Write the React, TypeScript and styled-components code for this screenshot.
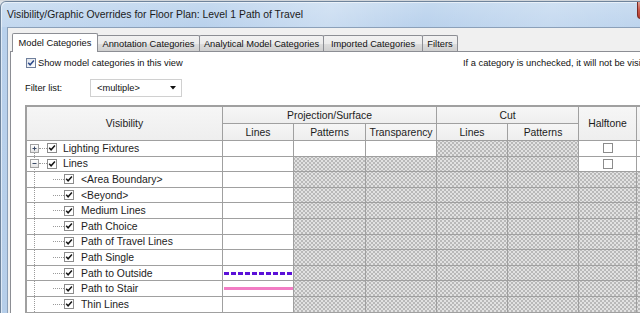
import React from "react";
import styled, { createGlobalStyle, css } from "styled-components";

const GlobalStyle = createGlobalStyle`
  html, body { margin: 0; padding: 0; }
  body {
    width: 640px; height: 313px; overflow: hidden; background: #dde2e8;
    font-family: "Liberation Sans", Arial, sans-serif;
  }
  #root { width: 640px; height: 313px; overflow: hidden; }
`;

const COLS = "196px 71px 72px 71px 71px 71px 58px 80px";
const GRID = "#a0a0a0";

const Screen = styled.div`
  width: 640px;
  height: 313px;
  overflow: hidden;
  display: flex;
  flex-direction: column;
  background: #dfe3e8;
`;

const BackStrip = styled.div`
  flex: none;
  height: 1px;
  background: #d2d6db;
`;

const Window = styled.div`
  flex: 1;
  width: 686px;
  min-height: 0;
  display: flex;
  flex-direction: column;
  box-sizing: border-box;
  border: 1px solid #6f849c;
  border-bottom: none;
  border-radius: 6px 6px 0 0;
  background: linear-gradient(180deg, #c6daf0 0px, #b9d1ec 26px, #b6cee9 100%);
  box-shadow: inset 1px 1px 0 rgba(255, 255, 255, 0.55);
`;

const TitleBar = styled.div`
  flex: none;
  height: 25px;
  display: flex;
  align-items: flex-start;
  padding: 0 6px;
  background: linear-gradient(
    105deg,
    rgba(255, 255, 255, 0.15) 0%,
    rgba(255, 255, 255, 0) 30%,
    rgba(255, 255, 255, 0.25) 48%,
    rgba(255, 255, 255, 0) 62%,
    rgba(255, 255, 255, 0.18) 80%,
    rgba(255, 255, 255, 0) 100%
  );
`;

const Title = styled.div`
  font-size: 10.4px;
  line-height: 25px;
  color: #1b1b1b;
  white-space: nowrap;
`;

const CloseButton = styled.div`
  margin-left: auto;
  width: 42px;
  height: 17px;
  box-sizing: border-box;
  border: 1px solid #7a2a22;
  border-top: none;
  border-radius: 0 0 4px 4px;
  background: linear-gradient(180deg, #e0a093 0%, #c8584a 50%, #b63b2c 100%);
`;

const Client = styled.div`
  flex: 1;
  min-height: 0;
  margin-left: 6px;
  padding: 5px 0 0 2px;
  display: flex;
  flex-direction: column;
  background: #f0f0f0;
  border-top: 1px solid #8ba0b9;
  border-left: 1px solid #8ba0b9;
`;

const TabStrip = styled.div`
  flex: none;
  height: 18px;
  display: flex;
  align-items: flex-end;
  padding-left: 2px;
`;

const Tab = styled.div<{ $active?: boolean; $w: number }>`
  position: relative;
  z-index: ${(p) => (p.$active ? 2 : 1)};
  width: ${(p) => p.$w}px;
  height: ${(p) => (p.$active ? 19 : 16)}px;
  margin-right: -1px;
  margin-bottom: ${(p) => (p.$active ? -1 : 0)}px;
  box-sizing: border-box;
  border: 1px solid #8c8e94;
  border-bottom: none;
  border-radius: 2px 2px 0 0;
  display: flex;
  align-items: center;
  justify-content: center;
  font-size: 9.3px;
  color: #111;
  white-space: nowrap;
  background: ${(p) =>
    p.$active
      ? "#ffffff"
      : "linear-gradient(180deg, #f2f2f2 0%, #ebebeb 50%, #dddddd 51%, #cfcfcf 100%)"};
`;

const Panel = styled.div`
  flex: 1;
  min-height: 0;
  display: flex;
  flex-direction: column;
  padding: 5px 0 0 14px;
  background: #ffffff;
  border-top: 1px solid #8c8e94;
  border-left: 1px solid #8c8e94;
`;

const TopRow = styled.div`
  display: grid;
  grid-template-columns: 438px auto;
  align-items: start;
  font-size: 9.3px;
  color: #111;
  white-space: nowrap;
`;

const CheckLabel = styled.label`
  display: flex;
  align-items: center;
  gap: 2px;
  height: 11px;
  margin-left: 1px;
`;

const Note = styled.div`
  padding-top: 1px;
`;

const Box = styled.span<{ $variant?: "aero" | "grid" }>`
  flex: none;
  width: 10px;
  height: 10px;
  box-sizing: border-box;
  display: inline-flex;
  align-items: center;
  justify-content: center;
  border: 1px solid ${(p) => (p.$variant === "aero" ? "#6f7f9c" : "#8c8c8c")};
  background: ${(p) =>
    p.$variant === "aero" ? "linear-gradient(135deg, #dfe3ea, #ffffff)" : "#ffffff"};
`;

const FilterRow = styled.div`
  margin-top: 11px;
  height: 18px;
  display: flex;
  align-items: center;
  font-size: 9.3px;
  color: #111;
`;

const FilterLabel = styled.span`
  width: 65px;
`;

const Combo = styled.div`
  width: 92px;
  height: 18px;
  box-sizing: border-box;
  border: 1px solid #d0d0d0;
  display: flex;
  align-items: center;
  justify-content: space-between;
  padding: 0 5px 0 6px;
  background: #fff;
`;

const TableWrap = styled.div`
  margin-top: 8px;
  width: max-content;
  border-top: 2px solid #a0a0a0;
  border-left: 2px solid #a0a0a0;
  background: #fff;
  font-size: 10.4px;
  color: #1c1c1c;
`;

const HeaderGrid = styled.div`
  display: grid;
  grid-template-columns: ${COLS};
  grid-template-rows: 17px 17px;
`;

const HeadCell = styled.div<{ $row: string; $col: string }>`
  grid-row: ${(p) => p.$row};
  grid-column: ${(p) => p.$col};
  box-sizing: border-box;
  border-right: 1px solid ${GRID};
  border-bottom: 1px solid ${GRID};
  display: flex;
  align-items: center;
  justify-content: center;
  white-space: nowrap;
  background: linear-gradient(180deg, #f6f6f6 0%, #eeeeee 100%);
`;

const Row = styled.div`
  display: grid;
  grid-template-columns: ${COLS};
  height: 15.6px;
`;

const hatchCss = css`
  background-color: #b9b9b9;
  background-image: radial-gradient(circle, #e2e2e2 0.8px, transparent 1.2px),
    radial-gradient(circle, #e2e2e2 0.8px, transparent 1.2px);
  background-size: 4px 4px;
  background-position: 0 0, 2px 2px;
`;

const Cell = styled.div<{ $hatch?: boolean; $center?: boolean }>`
  box-sizing: border-box;
  min-width: 0;
  overflow: hidden;
  border-right: 1px solid ${GRID};
  border-bottom: 1px solid ${GRID};
  display: flex;
  align-items: center;
  justify-content: ${(p) => (p.$center ? "center" : "flex-start")};
  background: #fff;
  ${(p) => p.$hatch && hatchCss}
`;

const dotted = "repeating-linear-gradient(180deg, #9a9a9a 0 1px, transparent 1px 2px)";

const TreeCell = styled(Cell)<{ $vline: "lower" | "full"; $level: number }>`
  padding-left: ${(p) => (p.$level === 0 ? 3 : 26)}px;
  white-space: nowrap;
  background: ${(p) =>
    p.$vline === "lower"
      ? `linear-gradient(#fff, #fff) 7px 0 / 1px 50% no-repeat, ${dotted} 7px 0 / 1px 100% no-repeat, #fff`
      : `${dotted} 7px 0 / 1px 100% no-repeat, #fff`};
`;

const Expander = styled.span`
  flex: none;
  width: 9px;
  height: 9px;
  box-sizing: border-box;
  border: 1px solid #a2a2a2;
  background: linear-gradient(180deg, #ffffff 0%, #e4e4e4 100%);
  display: inline-flex;
  align-items: center;
  justify-content: center;
`;

const Dots = styled.span<{ $w: number }>`
  flex: none;
  width: ${(p) => p.$w}px;
  height: 0;
  border-top: 1px dotted #9a9a9a;
`;

const RowLabel = styled.span<{ $gap: number }>`
  margin-left: ${(p) => p.$gap}px;
`;

const LineSample = styled.span<{ $kind: "dash" | "pink" }>`
  display: block;
  width: 69px;
  height: 3px;
  margin-left: 1px;
  background: ${(p) =>
    p.$kind === "dash"
      ? "repeating-linear-gradient(90deg, #5b10d8 0 5px, transparent 5px 7px)"
      : "#f27cc4"};
`;

const Check = ({ color = "#151515" }: { color?: string }) => (
  <svg width="8" height="8" viewBox="0 0 8 8">
    <path d="M1.2 3.8 L3.1 5.8 L6.9 1.6" fill="none" stroke={color} strokeWidth="1.5" />
  </svg>
);

const Glyph = ({ minus }: { minus?: boolean }) => (
  <svg width="7" height="7" viewBox="0 0 7 7">
    <path d="M1.5 3.5 H5.5" stroke="#3b4a66" strokeWidth="1" />
    {!minus && <path d="M3.5 1.5 V5.5" stroke="#3b4a66" strokeWidth="1" />}
  </svg>
);

type Kind = "lf" | "lines" | "child";
type RowData = { name: string; kind: Kind; sample?: "dash" | "pink" };

const rows: RowData[] = [
  { name: "Lighting Fixtures", kind: "lf" },
  { name: "Lines", kind: "lines" },
  { name: "<Area Boundary>", kind: "child" },
  { name: "<Beyond>", kind: "child" },
  { name: "Medium Lines", kind: "child" },
  { name: "Path Choice", kind: "child" },
  { name: "Path of Travel Lines", kind: "child" },
  { name: "Path Single", kind: "child" },
  { name: "Path to Outside", kind: "child", sample: "dash" },
  { name: "Path to Stair", kind: "child", sample: "pink" },
  { name: "Thin Lines", kind: "child" },
];

const tabs = [
  { label: "Model Categories", w: 86, active: true },
  { label: "Annotation Categories", w: 103 },
  { label: "Analytical Model Categories", w: 125 },
  { label: "Imported Categories", w: 100 },
  { label: "Filters", w: 36 },
];

const DataRow = ({ r }: { r: RowData }) => {
  const root = r.kind !== "child";
  const projHatch = r.kind !== "lf";
  return (
    <Row>
      <TreeCell $vline={r.kind === "lf" ? "lower" : "full"} $level={root ? 0 : 1}>
        {root && (
          <Expander>
            <Glyph minus={r.kind === "lines"} />
          </Expander>
        )}
        <Dots $w={root ? 8 : 11} />
        <Box>
          <Check />
        </Box>
        <RowLabel $gap={root ? 6 : 7}>{r.name}</RowLabel>
      </TreeCell>
      <Cell>{r.sample && <LineSample $kind={r.sample} />}</Cell>
      <Cell $hatch={projHatch} />
      <Cell $hatch={projHatch} />
      <Cell $hatch />
      <Cell $hatch />
      <Cell $hatch={!root} $center>
        {root && <Box />}
      </Cell>
      <Cell $hatch={!root} />
    </Row>
  );
};

export default function App() {
  return (
    <>
      <GlobalStyle />
      <Screen>
        <BackStrip />
        <Window>
          <TitleBar>
            <Title>Visibility/Graphic Overrides for Floor Plan: Level 1 Path of Travel</Title>
            <CloseButton />
          </TitleBar>
          <Client>
            <TabStrip>
              {tabs.map((t) => (
                <Tab key={t.label} $w={t.w} $active={t.active}>
                  {t.label}
                </Tab>
              ))}
            </TabStrip>
            <Panel>
              <TopRow>
                <CheckLabel>
                  <Box $variant="aero">
                    <Check color="#2d4a8a" />
                  </Box>
                  Show model categories in this view
                </CheckLabel>
                <Note>If a category is unchecked, it will not be visible.</Note>
              </TopRow>
              <FilterRow>
                <FilterLabel>Filter list:</FilterLabel>
                <Combo>
                  <span>&lt;multiple&gt;</span>
                  <svg width="6" height="4" viewBox="0 0 6 4">
                    <path d="M0 0 H6 L3 3.5 Z" fill="#111" />
                  </svg>
                </Combo>
              </FilterRow>
              <TableWrap>
                <HeaderGrid>
                  <HeadCell $row="1 / 3" $col="1">Visibility</HeadCell>
                  <HeadCell $row="1" $col="2 / 5">Projection/Surface</HeadCell>
                  <HeadCell $row="1" $col="5 / 7">Cut</HeadCell>
                  <HeadCell $row="1 / 3" $col="7">Halftone</HeadCell>
                  <HeadCell $row="1 / 3" $col="8" />
                  <HeadCell $row="2" $col="2">Lines</HeadCell>
                  <HeadCell $row="2" $col="3">Patterns</HeadCell>
                  <HeadCell $row="2" $col="4">Transparency</HeadCell>
                  <HeadCell $row="2" $col="5">Lines</HeadCell>
                  <HeadCell $row="2" $col="6">Patterns</HeadCell>
                </HeaderGrid>
                {rows.map((r) => (
                  <DataRow key={r.name} r={r} />
                ))}
              </TableWrap>
            </Panel>
          </Client>
        </Window>
      </Screen>
    </>
  );
}
